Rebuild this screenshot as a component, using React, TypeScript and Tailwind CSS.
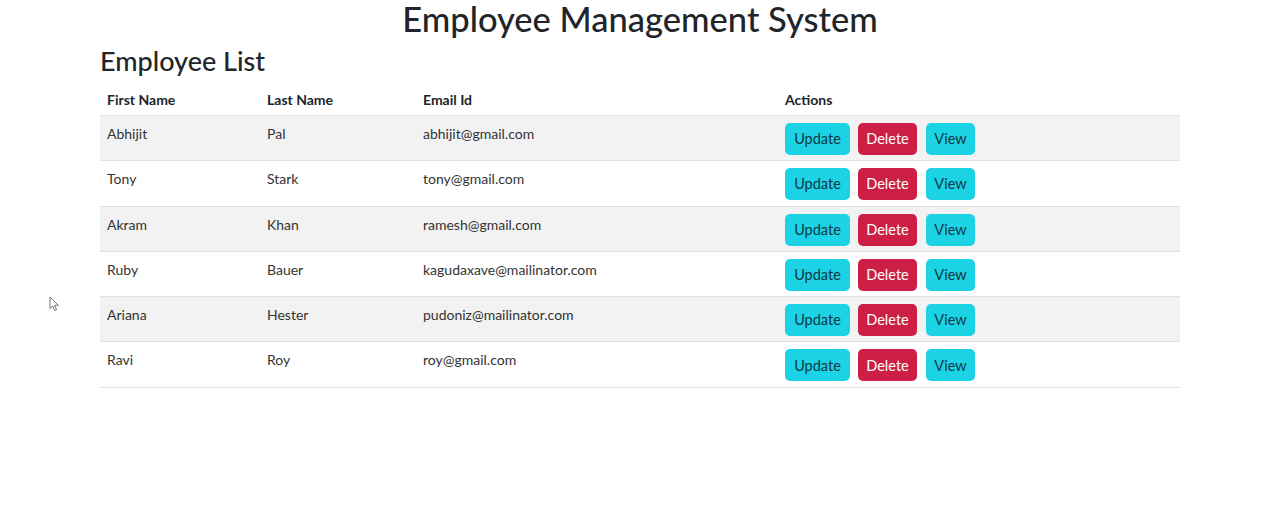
import React from 'react'

const employees = [
  { firstName: 'Abhijit', lastName: 'Pal', email: 'abhijit@gmail.com' },
  { firstName: 'Tony', lastName: 'Stark', email: 'tony@gmail.com' },
  { firstName: 'Akram', lastName: 'Khan', email: 'ramesh@gmail.com' },
  { firstName: 'Ruby', lastName: 'Bauer', email: 'kagudaxave@mailinator.com' },
  { firstName: 'Ariana', lastName: 'Hester', email: 'pudoniz@mailinator.com' },
  { firstName: 'Ravi', lastName: 'Roy', email: 'roy@gmail.com' },
]

export default function App() {
  return (
    <div
      className="relative min-h-[515px] bg-white text-[#212529]"
      style={{ fontFamily: 'Lato, "Open Sans", sans-serif' }}
    >
      <h1 className="text-center text-[34.5px] leading-[38px] font-medium">Employee Management System</h1>
      <div className="mx-auto w-[1080px]">
        <h2 className="mt-[4px] text-[27px] leading-[38px] font-medium">Employee List</h2>
        <table className="mt-[5px] w-full table-fixed border-collapse text-[14px]">
          <colgroup>
            <col className="w-[160px]" />
            <col className="w-[156px]" />
            <col className="w-[362px]" />
            <col className="w-[402px]" />
          </colgroup>
          <thead>
            <tr className="border-b border-[#dee2e6] text-left">
              <th className="px-[7px] pt-[4px] pb-[4px] leading-[22px] font-bold">First Name</th>
              <th className="px-[7px] pt-[4px] pb-[4px] leading-[22px] font-bold">Last Name</th>
              <th className="px-[7px] pt-[4px] pb-[4px] leading-[22px] font-bold">Email Id</th>
              <th className="px-[7px] pt-[4px] pb-[4px] leading-[22px] font-bold">Actions</th>
            </tr>
          </thead>
          <tbody>
            {employees.map((emp, index) => (
              <tr
                key={index}
                className={`border-b border-[#dee2e6] ${index % 2 === 0 ? 'bg-[#f2f2f2]' : 'bg-white'}`}
              >
                <td className="h-[45.3px] px-[7px] pt-[7px] align-top leading-[22px] text-[#333]">{emp.firstName}</td>
                <td className="px-[7px] pt-[7px] align-top leading-[22px] text-[#333]">{emp.lastName}</td>
                <td className="px-[7px] pt-[7px] align-top leading-[22px] text-[#333]">{emp.email}</td>
                <td className="px-[7px] pt-[7px] align-top">
                  <div className="flex gap-[8px]">
                    <button className="h-[32px] w-[65px] rounded-[5px] bg-[#1bd3e4] text-[14.5px] text-[#0e3a42]">
                      Update
                    </button>
                    <button className="h-[32px] w-[59px] rounded-[5px] bg-[#cd1f45] text-[14.5px] text-white">
                      Delete
                    </button>
                    <button className="ml-[1px] h-[32px] w-[49px] rounded-[5px] bg-[#1bd3e4] text-[14.5px] text-[#0e3a42]">
                      View
                    </button>
                  </div>
                </td>
              </tr>
            ))}
          </tbody>
        </table>
      </div>
      {/* mouse pointer captured in the screenshot */}
      <svg className="absolute left-[49px] top-[296px]" width="11" height="16" viewBox="0 0 11 16">
        <path d="M1 1 L1 12.5 L3.8 10 L5.8 14.5 L7.6 13.7 L5.6 9.3 L9.3 9.3 Z" fill="white" stroke="#666" strokeWidth="0.9" />
      </svg>
    </div>
  )
}
